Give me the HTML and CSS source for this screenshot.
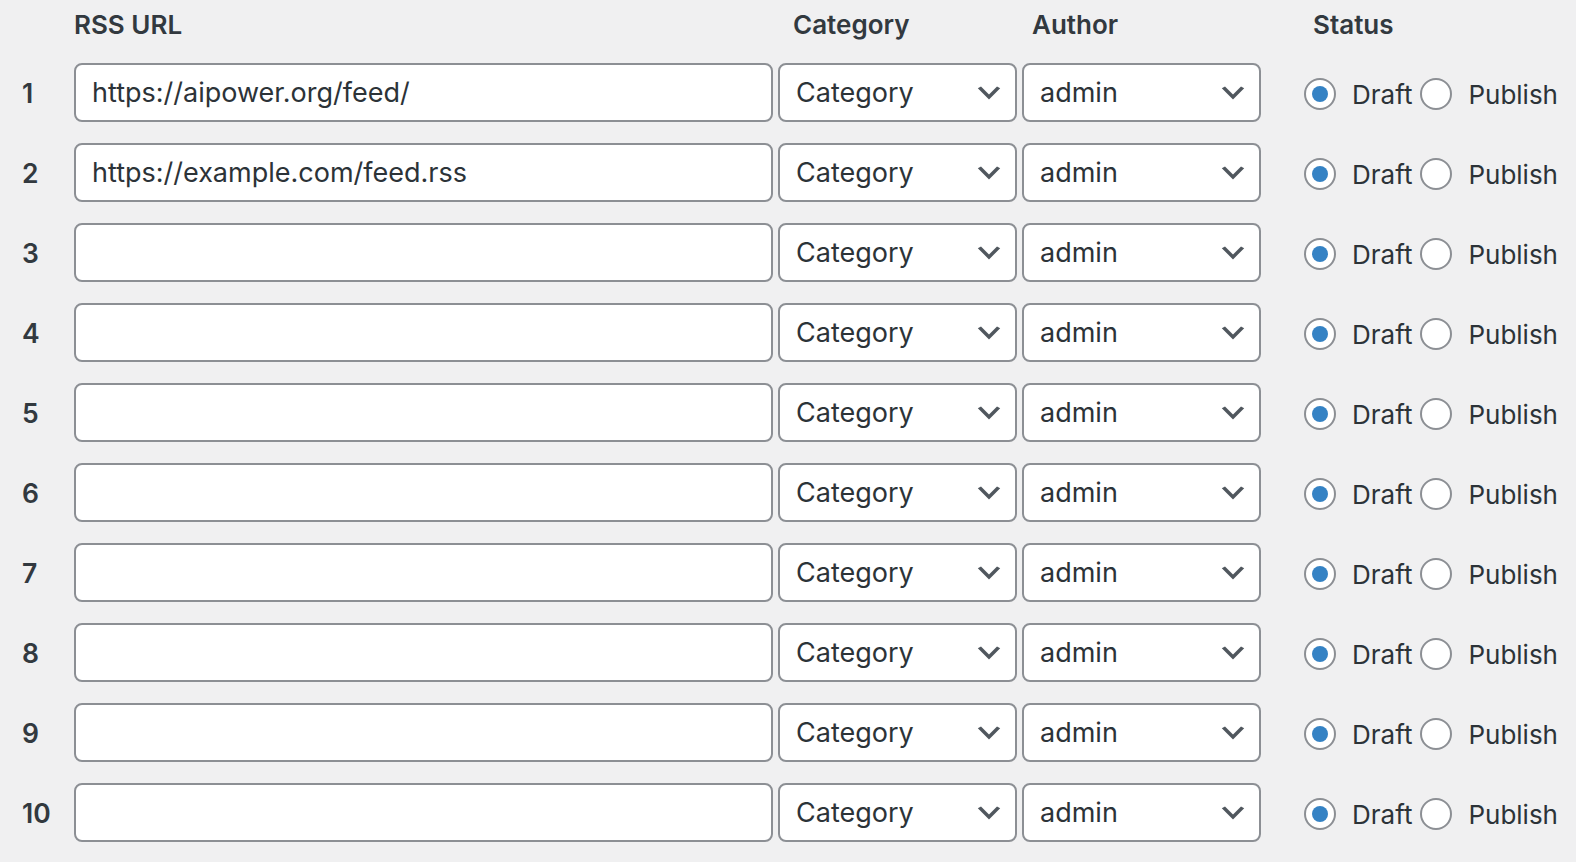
FILE: index.html
```html
<!DOCTYPE html>
<html>
<head>
<meta charset="utf-8">
<link rel="stylesheet" href="styles.css">
</head>
<body>
<div class="feeds">
  <div class="row head">
    <div class="th th-num"></div>
    <div class="th th-url">RSS URL</div>
    <div class="th th-cat">Category</div>
    <div class="th th-author">Author</div>
    <div class="th th-status">Status</div>
  </div>
  <div class="row">
    <div class="num">1</div>
    <input class="url" type="text" value="https://aipower.org/feed/">
    <div class="select"><span>Category</span><svg class="chev" viewBox="0 0 20 20"><path d="M5 6l5 5 5-5 2 1-7 7-7-7 2-1z"/></svg></div>
    <div class="select select-author"><span>admin</span><svg class="chev" viewBox="0 0 20 20"><path d="M5 6l5 5 5-5 2 1-7 7-7-7 2-1z"/></svg></div>
    <div class="status"><span class="radio checked"></span><span class="lbl">Draft</span><span class="radio"></span><span class="lbl lbl-pub">Publish</span></div>
  </div>
  <div class="row">
    <div class="num">2</div>
    <input class="url" type="text" value="https://example.com/feed.rss">
    <div class="select"><span>Category</span><svg class="chev" viewBox="0 0 20 20"><path d="M5 6l5 5 5-5 2 1-7 7-7-7 2-1z"/></svg></div>
    <div class="select select-author"><span>admin</span><svg class="chev" viewBox="0 0 20 20"><path d="M5 6l5 5 5-5 2 1-7 7-7-7 2-1z"/></svg></div>
    <div class="status"><span class="radio checked"></span><span class="lbl">Draft</span><span class="radio"></span><span class="lbl lbl-pub">Publish</span></div>
  </div>
  <div class="row">
    <div class="num">3</div>
    <input class="url" type="text" value="">
    <div class="select"><span>Category</span><svg class="chev" viewBox="0 0 20 20"><path d="M5 6l5 5 5-5 2 1-7 7-7-7 2-1z"/></svg></div>
    <div class="select select-author"><span>admin</span><svg class="chev" viewBox="0 0 20 20"><path d="M5 6l5 5 5-5 2 1-7 7-7-7 2-1z"/></svg></div>
    <div class="status"><span class="radio checked"></span><span class="lbl">Draft</span><span class="radio"></span><span class="lbl lbl-pub">Publish</span></div>
  </div>
  <div class="row">
    <div class="num">4</div>
    <input class="url" type="text" value="">
    <div class="select"><span>Category</span><svg class="chev" viewBox="0 0 20 20"><path d="M5 6l5 5 5-5 2 1-7 7-7-7 2-1z"/></svg></div>
    <div class="select select-author"><span>admin</span><svg class="chev" viewBox="0 0 20 20"><path d="M5 6l5 5 5-5 2 1-7 7-7-7 2-1z"/></svg></div>
    <div class="status"><span class="radio checked"></span><span class="lbl">Draft</span><span class="radio"></span><span class="lbl lbl-pub">Publish</span></div>
  </div>
  <div class="row">
    <div class="num">5</div>
    <input class="url" type="text" value="">
    <div class="select"><span>Category</span><svg class="chev" viewBox="0 0 20 20"><path d="M5 6l5 5 5-5 2 1-7 7-7-7 2-1z"/></svg></div>
    <div class="select select-author"><span>admin</span><svg class="chev" viewBox="0 0 20 20"><path d="M5 6l5 5 5-5 2 1-7 7-7-7 2-1z"/></svg></div>
    <div class="status"><span class="radio checked"></span><span class="lbl">Draft</span><span class="radio"></span><span class="lbl lbl-pub">Publish</span></div>
  </div>
  <div class="row">
    <div class="num">6</div>
    <input class="url" type="text" value="">
    <div class="select"><span>Category</span><svg class="chev" viewBox="0 0 20 20"><path d="M5 6l5 5 5-5 2 1-7 7-7-7 2-1z"/></svg></div>
    <div class="select select-author"><span>admin</span><svg class="chev" viewBox="0 0 20 20"><path d="M5 6l5 5 5-5 2 1-7 7-7-7 2-1z"/></svg></div>
    <div class="status"><span class="radio checked"></span><span class="lbl">Draft</span><span class="radio"></span><span class="lbl lbl-pub">Publish</span></div>
  </div>
  <div class="row">
    <div class="num">7</div>
    <input class="url" type="text" value="">
    <div class="select"><span>Category</span><svg class="chev" viewBox="0 0 20 20"><path d="M5 6l5 5 5-5 2 1-7 7-7-7 2-1z"/></svg></div>
    <div class="select select-author"><span>admin</span><svg class="chev" viewBox="0 0 20 20"><path d="M5 6l5 5 5-5 2 1-7 7-7-7 2-1z"/></svg></div>
    <div class="status"><span class="radio checked"></span><span class="lbl">Draft</span><span class="radio"></span><span class="lbl lbl-pub">Publish</span></div>
  </div>
  <div class="row">
    <div class="num">8</div>
    <input class="url" type="text" value="">
    <div class="select"><span>Category</span><svg class="chev" viewBox="0 0 20 20"><path d="M5 6l5 5 5-5 2 1-7 7-7-7 2-1z"/></svg></div>
    <div class="select select-author"><span>admin</span><svg class="chev" viewBox="0 0 20 20"><path d="M5 6l5 5 5-5 2 1-7 7-7-7 2-1z"/></svg></div>
    <div class="status"><span class="radio checked"></span><span class="lbl">Draft</span><span class="radio"></span><span class="lbl lbl-pub">Publish</span></div>
  </div>
  <div class="row">
    <div class="num">9</div>
    <input class="url" type="text" value="">
    <div class="select"><span>Category</span><svg class="chev" viewBox="0 0 20 20"><path d="M5 6l5 5 5-5 2 1-7 7-7-7 2-1z"/></svg></div>
    <div class="select select-author"><span>admin</span><svg class="chev" viewBox="0 0 20 20"><path d="M5 6l5 5 5-5 2 1-7 7-7-7 2-1z"/></svg></div>
    <div class="status"><span class="radio checked"></span><span class="lbl">Draft</span><span class="radio"></span><span class="lbl lbl-pub">Publish</span></div>
  </div>
  <div class="row">
    <div class="num">10</div>
    <input class="url" type="text" value="">
    <div class="select"><span>Category</span><svg class="chev" viewBox="0 0 20 20"><path d="M5 6l5 5 5-5 2 1-7 7-7-7 2-1z"/></svg></div>
    <div class="select select-author"><span>admin</span><svg class="chev" viewBox="0 0 20 20"><path d="M5 6l5 5 5-5 2 1-7 7-7-7 2-1z"/></svg></div>
    <div class="status"><span class="radio checked"></span><span class="lbl">Draft</span><span class="radio"></span><span class="lbl lbl-pub">Publish</span></div>
  </div>
</div>
</body>
</html>
```

FILE: styles.css
```css
html, body {
  margin: 0;
  padding: 0;
  background: #f0f0f1;
}
body {
  font-family: Inter, "Open Sans", sans-serif;
  color: #2c3338;
  width: 1576px;
  height: 862px;
  overflow: hidden;
}
.feeds {
  display: flex;
  flex-direction: column;
  row-gap: 21px;
}
.row {
  display: grid;
  grid-template-columns: 69px 699px 239px 239px 1fr;
  column-gap: 5px;
  height: 59px;
  align-items: center;
}
.row.head {
  height: 42px;
  align-items: start;
}
.th {
  font-size: 26px;
  font-weight: 600;
  color: #32393f;
  line-height: 34px;
  padding-top: 8px;
}
.th-url { padding-left: 0; }
.th-cat { padding-left: 15px; }
.th-author { padding-left: 10px; }
.th-status { padding-left: 47px; }
.num {
  padding-left: 22px;
  font-size: 26.5px;
  font-weight: 600;
  color: #32393f;
}
.url {
  box-sizing: border-box;
  height: 59px;
  width: 699px;
  margin: 0;
  border: 2px solid #8c8f94;
  border-radius: 8px;
  background: #fff;
  padding: 0 16px;
  font-family: Inter, "Open Sans", sans-serif;
  font-size: 27px;
  color: #2c3338;
  outline: none;
}
.select {
  box-sizing: border-box;
  height: 59px;
  border: 2px solid #8c8f94;
  border-radius: 8px;
  background: #fff;
  display: flex;
  align-items: center;
  justify-content: space-between;
  padding: 0 10px 0 16px;
  font-size: 27px;
  color: #2c3338;
}
.select-author { padding-left: 16px; }
.chev {
  width: 32px;
  height: 32px;
  fill: #50575e;
}
.status {
  display: flex;
  align-items: center;
  padding-left: 38px;
  font-size: 26px;
  color: #2c3338;
  padding-top: 3px;
}
.radio {
  box-sizing: border-box;
  width: 32px;
  height: 32px;
  border-radius: 50%;
  border: 2px solid #8c8f94;
  background: #fff;
  display: flex;
  align-items: center;
  justify-content: center;
  flex: none;
}
.radio.checked::before {
  content: "";
  width: 16px;
  height: 16px;
  border-radius: 50%;
  background: #3582c4;
}
.lbl {
  margin-left: 16px;
  margin-right: 8px;
}
.lbl-pub {
  margin-left: 16px;
  margin-right: 0;
}
```
